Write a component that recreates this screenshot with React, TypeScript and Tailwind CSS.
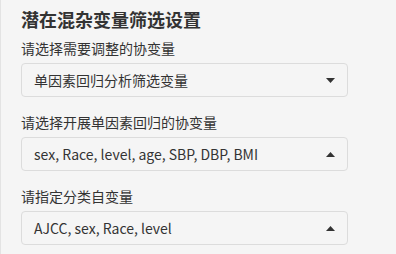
import React from "react";

const fields = [
  { label: "请选择需要调整的协变量", value: "单因素回归分析筛选变量", open: false },
  { label: "请选择开展单因素回归的协变量", value: "sex, Race, level, age, SBP, DBP, BMI", open: true },
  { label: "请指定分类自变量", value: "AJCC, sex, Race, level", open: true },
];

const Caret = ({ up }: { up: boolean }) => (
  <svg width="9" height="5" viewBox="0 0 9 5" className="text-[#333]">
    {up ? <path d="M0 5 L4.5 0 L9 5 Z" fill="currentColor" /> : <path d="M0 0 L9 0 L4.5 5 Z" fill="currentColor" />}
  </svg>
);

export default function App() {
  return (
    <div
      className="w-[396px] h-[254px] bg-[#f5f5f5] border-l border-[#e3e3e3] overflow-hidden text-[#333]"
      style={{ fontFamily: '"Noto Sans CJK SC", "Noto Sans", sans-serif' }}
    >
      <div className="pl-[20px] pr-[48px] pt-[5px]">
        <h3 className="text-[18px] font-bold leading-[28px] mb-[5px]">潜在混杂变量筛选设置</h3>
        {fields.map((f) => (
          <div key={f.label} className="mb-[15px]">
            <div className="text-[14px] leading-[20px] mb-[5px]">{f.label}</div>
            <div className="h-[34px] flex items-center justify-between border border-[#dcdcdc] rounded-[4px] pl-[12px] pr-[12px]">
              <span className="text-[14px]">{f.value}</span>
              <Caret up={f.open} />
            </div>
          </div>
        ))}
      </div>
    </div>
  );
}
